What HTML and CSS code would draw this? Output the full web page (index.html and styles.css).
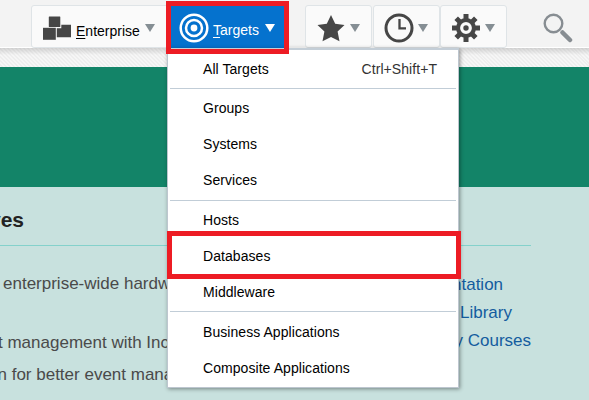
FILE: index.html
```
<!DOCTYPE html>
<html lang="en">
<head>
<meta charset="utf-8">
<title>Targets menu</title>
<link rel="stylesheet" href="styles.css">
</head>
<body>
<header class="toolbar">
  <div class="tab enterprise">
    <svg width="29" height="25" viewBox="0 0 29 25" fill="#464646"><rect x="6.800" y="0.500" width="11.500" height="10.500" rx=".5"/><path d="M1 11.800h12.800v12H1z"/><path d="M14.800 12.200h4.500V8.800H29v12.500H14.800z"/></svg>
    <span class="label"><u>E</u>nterprise</span><i class="caret"></i>
  </div>
  <div class="tab targets">
    <svg width="30" height="30" viewBox="0 0 30 30" fill="none" stroke="#fff"><circle cx="15" cy="15" r="13.300" stroke-width="2.500"/><circle cx="15" cy="15" r="8" stroke-width="2.500"/><circle cx="15" cy="15" r="3.400" fill="#fff" stroke="none"/></svg>
    <span class="label"><u>T</u>argets</span><i class="caret"></i>
  </div>
  <div class="tab tool first">
    <svg width="30" height="30" viewBox="0 0 30 30" fill="#464646"><path d="M15 2l4.200 8.700 9.300 1.200-6.900 6.500 1.900 9.900-8.500-4.300-8.500 4.300 1.900-9.900L1.500 11.900l9.300-1.200z"/></svg><i class="caret"></i>
  </div>
  <div class="tab tool">
    <svg width="30" height="30" viewBox="0 0 30 30" fill="none" stroke="#464646"><circle cx="15" cy="15" r="13" stroke-width="3"/><path d="M15.500 6v9.300H22" stroke-width="2.300"/></svg><i class="caret"></i>
  </div>
  <div class="tab tool">
    <svg width="30" height="30" viewBox="0 0 30 30"><g stroke="#464646" stroke-width="5"><path d="M15 1v28M1 15h28M5.200 5.200l19.600 19.600M24.800 5.200L5.200 24.800"/></g><circle cx="15" cy="15" r="10" fill="#464646"/><circle cx="15" cy="15" r="4.300" fill="#464646" stroke="#fafafa" stroke-width="3.200"/></svg><i class="caret"></i>
  </div>
  <svg class="search" width="30" height="30" viewBox="0 0 30 30" fill="none" stroke="#878d92"><circle cx="10.500" cy="10.500" r="8.800" stroke-width="2.400"/><path d="M19.500 19.500l7.500 7.500" stroke-width="4.500" stroke-linecap="round"/></svg>
</header>
<div class="hatch"></div>
<div class="banner"></div>
<main class="content">
  <section class="features">
    <h2>ves</h2>
    <p class="one">enterprise-wide hardw</p>
    <p class="two">t management with Inc</p>
    <p class="three">n for better event mana</p>
  </section>
  <section class="links">
    <div class="rule"></div>
    <a class="docs">ntation</a>
    <a class="library">Library</a>
    <a class="courses">y Courses</a>
  </section>
</main>
<nav class="menu">
  <div class="item"><span>All Targets</span><span class="key">Ctrl+Shift+T</span></div>
  <div class="sep top"></div>
  <div class="item">Groups</div>
  <div class="item">Systems</div>
  <div class="item">Services</div>
  <div class="sep middle"></div>
  <div class="item">Hosts</div>
  <div class="item">Databases</div>
  <div class="item">Middleware</div>
  <div class="sep"></div>
  <div class="item">Business Applications</div>
  <div class="item">Composite Applications</div>
</nav>
<div class="mark mark-tab"></div>
<div class="mark mark-item"></div>
</body>
</html>
```
FILE: styles.css
```
* { box-sizing: border-box; }
body {
  position: relative;
  margin: 0;
  width: 589px;
  height: 400px;
  overflow: hidden;
  font-family: "Liberation Sans", Arial, sans-serif;
  background: #c8e1de;
}
svg { display: block; flex: none; }
.toolbar {
  display: flex;
  height: 48px;
  padding: 5px 0 0 31px;
  background: #f3f3f3;
  border-bottom: 1px solid #fff;
}
.tab {
  display: flex;
  align-items: center;
  height: 43px;
  border: 1px solid #dfe4e7;
  border-radius: 3px;
  background: #fafafa;
  font-size: 14px;
  color: #000;
}
.enterprise { width: 140px; padding-left: 10px; }
.enterprise svg { margin-top: 3px; }
.enterprise .label { margin: 8px 0 0 5px; width: 65px; }
.enterprise .caret { margin: 3px 0 0 4px; }
.targets {
  width: 113px;
  height: 43px;
  padding: 2px 0 0 8px;
  border: 0;
  border-radius: 0;
  background: #0572ce;
  color: #fff;
}
.targets .label { margin: 4px 0 0 4px; width: 48px; }
.targets .caret { margin: 0 0 0 4px; border-top-color: #fff; }
.label { line-height: 16px; white-space: nowrap; }
.label u { text-underline-offset: 2px; text-decoration-thickness: 1px; }
.caret {
  width: 0;
  height: 0;
  border: 5px solid transparent;
  border-top: 8px solid #858e94;
  border-bottom: 0;
}
.tool { width: 67px; padding: 3px 0 0 10px; }
.tool.first { margin-left: 21px; }
.tool .caret { margin-left: 4px; }
.tool + .tool { margin-left: .5px; }
.search { margin: 8px 0 0 36px; }
.hatch {
  height: 19px;
  background:
    linear-gradient(rgba(110,110,110,.25), rgba(110,110,110,0) 7px),
    repeating-linear-gradient(45deg, #f6f6f6 0 1.4px, #eee 1.4px 2.8px);
}
.banner { height: 120px; background: #138468; }
.content { display: flex; height: 213px; }
.features { width: 167px; overflow: hidden; white-space: nowrap; }
h2 {
  margin: 0 0 27px;
  height: 59px;
  padding-top: 20px;
  border-bottom: 1px solid #84d1cb;
  font-size: 21px;
  line-height: 26px;
  color: #222;
  text-indent: -11px;
}
.features p {
  margin: 0;
  height: 32px;
  font-size: 17px;
  line-height: 22px;
  color: #4a4a4a;
}
.one { padding-left: 3px; }
.features .one { height: 59px; }
.two { text-indent: -2px; }
.three { text-indent: -2.500px; }
.links { width: 72px; margin-left: 292px; white-space: nowrap; }
.rule { height: 59px; margin-bottom: 25px; border-bottom: 1px solid #84d1cb; }
.links a {
  display: block;
  height: 28px;
  font-size: 17px;
  line-height: 28px;
  color: #145c9e;
}
.docs { margin-left: -7px; }
.library { margin-left: 1px; }
.courses { margin-left: -4.500px; }
.menu {
  position: absolute;
  left: 167px;
  top: 48px;
  width: 292px;
  height: 340px;
  padding: 1px 2px 0;
  border: 1px solid #bdc6cf;
  border-top: 2px solid #c4ced7;
  background: #fff;
  box-shadow: 1px 1px 4px rgba(0,0,0,.42);
}
.item {
  display: flex;
  justify-content: space-between;
  align-items: center;
  height: 36px;
  padding: 0 19px 0 33px;
  font-size: 14px;
  line-height: 16px;
  letter-spacing: .06px;
  color: #000;
}
.key { color: #333; }
.sep { height: 1px; margin: 1px 0 2px; background: #c1cdd7; }
.sep.top { margin-bottom: 1px; }
.sep.middle { margin: 2px 0 1px; }
.mark { position: absolute; border: 5px solid #ed1c24; }
.mark-tab { left: 166px; top: 1px; width: 123px; height: 53px; box-shadow: inset 0 -1px #c4ced7; }
.mark-item { left: 167px; top: 231px; width: 294px; height: 48px; }
```
